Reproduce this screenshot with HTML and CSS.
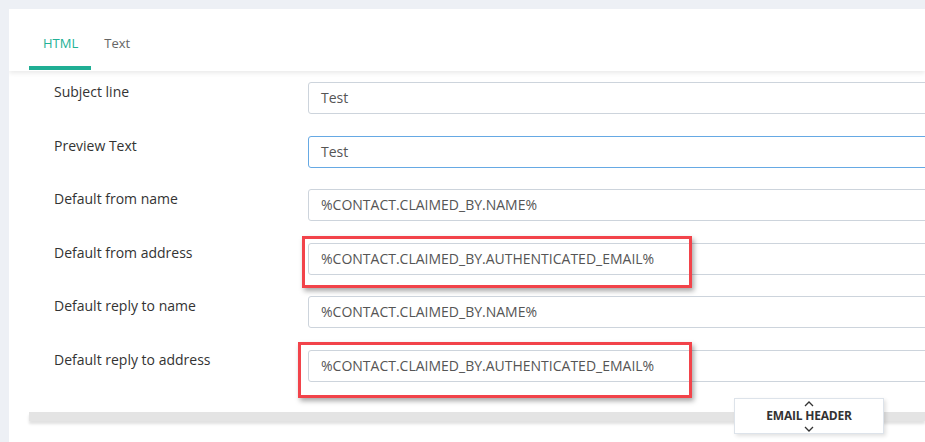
FILE: index.html
```html
<!DOCTYPE html>
<html>
<head>
<meta charset="utf-8">
<link rel="stylesheet" href="styles.css">
</head>
<body>
<div class="card">
  <div class="tabs">
    <div class="tab active">HTML</div>
    <div class="tab">Text</div>
  </div>
  <div class="form">
    <div class="row">
      <div class="label">Subject line</div>
      <div class="field"><div class="input">Test</div></div>
    </div>
    <div class="row">
      <div class="label">Preview Text</div>
      <div class="field"><div class="input focus">Test</div></div>
    </div>
    <div class="row">
      <div class="label">Default from name</div>
      <div class="field"><div class="input">%CONTACT.CLAIMED_BY.NAME%</div></div>
    </div>
    <div class="row">
      <div class="label">Default from address</div>
      <div class="field">
        <div class="input">%CONTACT.CLAIMED_BY.AUTHENTICATED_EMAIL%</div>
        <div class="mark mark-a"></div>
      </div>
    </div>
    <div class="row">
      <div class="label">Default reply to name</div>
      <div class="field"><div class="input">%CONTACT.CLAIMED_BY.NAME%</div></div>
    </div>
    <div class="row">
      <div class="label">Default reply to address</div>
      <div class="field">
        <div class="input">%CONTACT.CLAIMED_BY.AUTHENTICATED_EMAIL%</div>
        <div class="mark mark-b"></div>
      </div>
    </div>
  </div>
  <div class="footer">
    <div class="splitter"></div>
    <div class="toggle">
      <svg class="chev" width="10" height="6" viewBox="0 0 10 6"><path d="M1 5 L5 1 L9 5" fill="none" stroke="#333" stroke-width="1.3"/></svg>
      <span>EMAIL HEADER</span>
      <svg class="chev" width="10" height="6" viewBox="0 0 10 6"><path d="M1 1 L5 5 L9 1" fill="none" stroke="#333" stroke-width="1.3"/></svg>
    </div>
  </div>
</div>
</body>
</html>
```
FILE: styles.css
```css
html, body {
  margin: 0;
  padding: 0;
  overflow: hidden;
  height: 442px;
}
body {
  background: #edf0f5;
  font-family: "Open Sans", "Noto Sans", sans-serif;
  padding: 9px 0 0 9px;
  box-sizing: border-box;
}
.card {
  background: #fff;
  width: 916px;
  height: 433px;
  overflow: hidden;
}
.tabs {
  display: flex;
  height: 62px;
  padding-left: 20px;
  box-shadow: 0 2px 5px rgba(0, 0, 0, 0.09);
  position: relative;
  z-index: 1;
}
.tab {
  font-size: 13px;
  color: #666;
  padding: 25px 13px 0 13px;
  box-sizing: border-box;
  height: 62px;
  border-bottom: 3px solid transparent;
  line-height: 18px;
}
.tab.active {
  color: #23b196;
  border-bottom: 4px solid #1fae94;
  height: 61px;
  padding-left: 14px;
}
.form {
  padding: 11px 0 0 45px;
  display: flex;
  flex-direction: column;
  gap: 21.6px;
}
.row {
  display: flex;
  align-items: flex-start;
}
.label {
  width: 254px;
  flex: none;
  font-size: 14px;
  color: #333;
  line-height: 20px;
}
.field {
  position: relative;
  flex: 1;
  margin-right: -12px;
}
.input {
  height: 32px;
  box-sizing: border-box;
  border: 1px solid #cdd4dc;
  border-radius: 3px;
  padding: 0 12px;
  font-size: 14px;
  line-height: 30px;
  color: #555;
}
.input.focus {
  border-color: #66a9e4;
}
.mark {
  position: absolute;
  border: 3px solid #f2434a;
  box-shadow: 2px 3px 5px rgba(0, 0, 0, 0.35);
  box-sizing: border-box;
}
.mark-a {
  left: -6px;
  top: -7px;
  width: 390px;
  height: 52px;
}
.mark-b {
  left: -10px;
  top: -8px;
  width: 394px;
  height: 56px;
}
.footer {
  position: relative;
  padding: 30px 0 0 20px;
}
.splitter {
  height: 9px;
  background: #e4e4e4;
  box-shadow: 0 3px 3px rgba(0, 0, 0, 0.12);
}
.toggle {
  position: absolute;
  left: 725px;
  top: 16px;
  width: 150px;
  height: 36px;
  box-sizing: border-box;
  background: #fff;
  border: 1px solid #dde3ea;
  box-shadow: 2px 2px 4px rgba(0, 0, 0, 0.12);
  display: flex;
  flex-direction: column;
  align-items: center;
  justify-content: space-between;
  padding: 2px 0 1px;
}
.toggle span {
  font-size: 12px;
  font-weight: 700;
  color: #333;
  line-height: 14px;
  letter-spacing: -0.2px;
}
.chev {
  display: block;
}
```
